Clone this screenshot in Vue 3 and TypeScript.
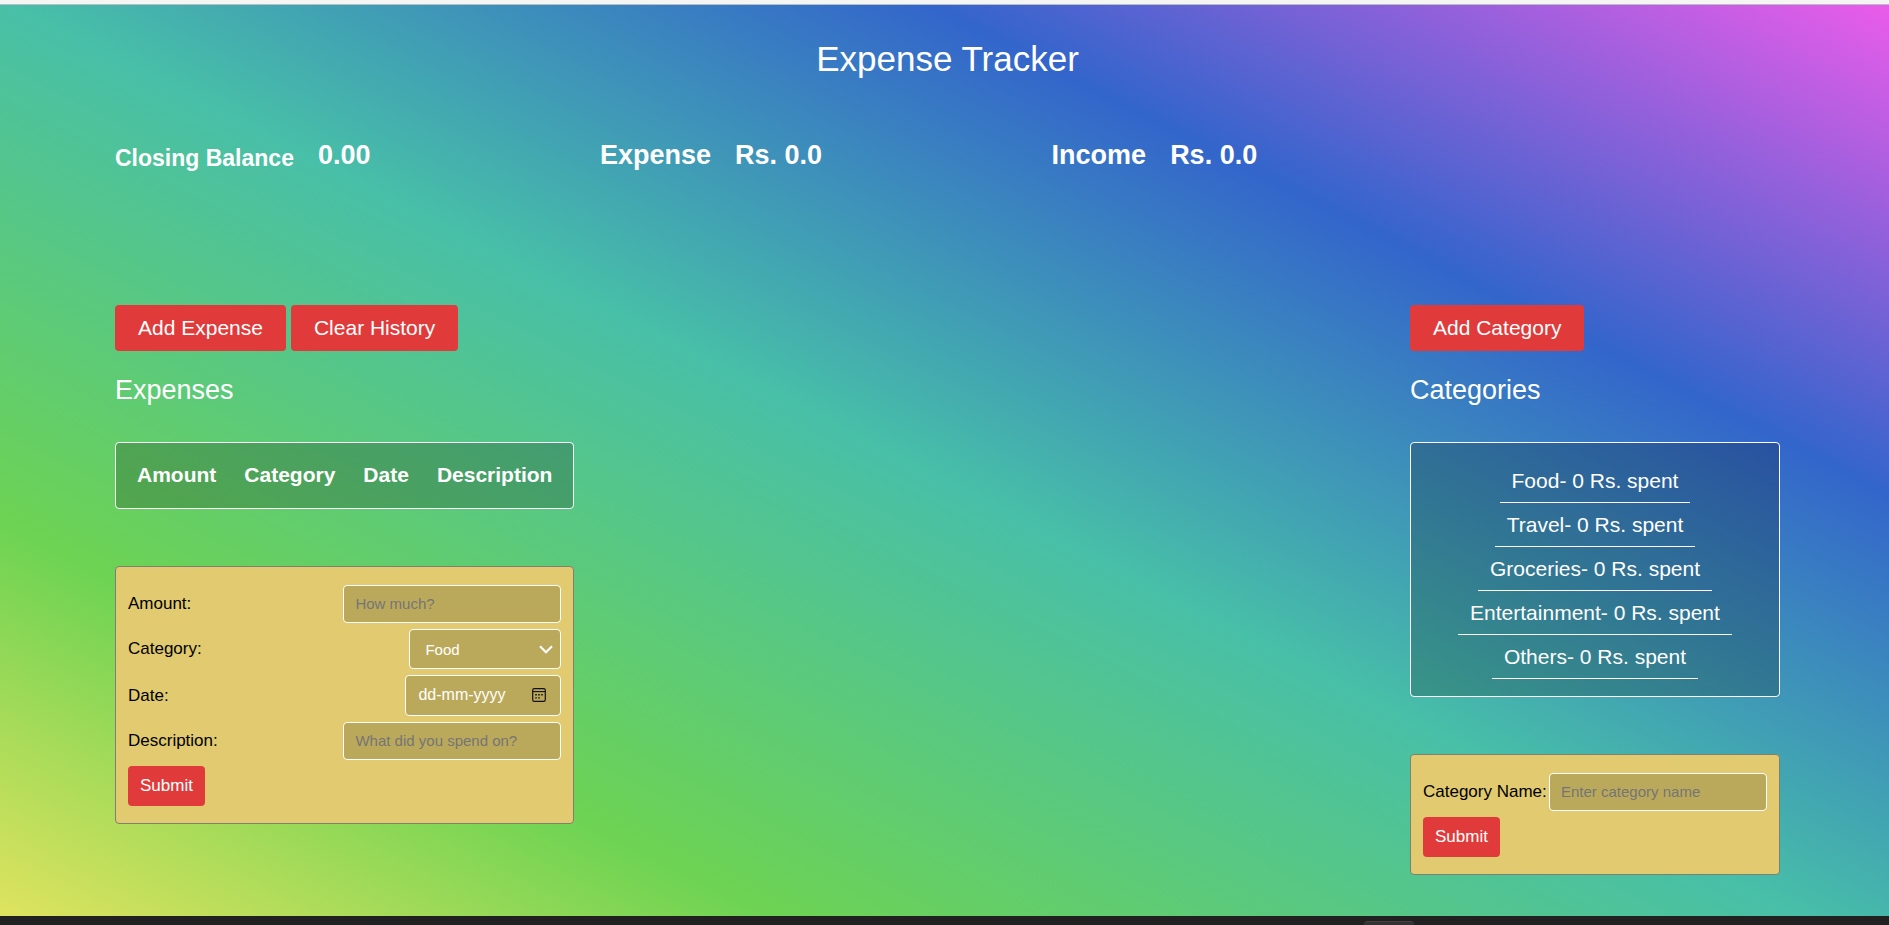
<script setup lang="ts">
import { ref } from 'vue'

interface Category {
  name: string
  spent: number
}

const columns: string[] = ['Amount', 'Category', 'Date', 'Description']
const categories = ref<Category[]>([
  { name: 'Food', spent: 0 },
  { name: 'Travel', spent: 0 },
  { name: 'Groceries', spent: 0 },
  { name: 'Entertainment', spent: 0 },
  { name: 'Others', spent: 0 },
])

const amount = ref('')
const selected = ref('Food')
const date = ref('')
const description = ref('')
const categoryName = ref('')

function addCategory(): void {
  const name = categoryName.value.trim()
  if (name) categories.value.push({ name, spent: 0 })
  categoryName.value = ''
}
</script>

<template>
  <div class="app">
    <div class="top-edge"></div>
    <main class="page">
      <h1>Expense Tracker</h1>

      <section class="summary">
        <div class="figure"><span class="closing">Closing Balance</span><span>0.00</span></div>
        <div class="figure"><span>Expense</span><span>Rs. 0.0</span></div>
        <div class="figure"><span>Income</span><span>Rs. 0.0</span></div>
      </section>

      <div class="columns">
        <section class="column">
          <div class="actions">
            <button class="btn large" type="button">Add Expense</button>
            <button class="btn large" type="button">Clear History</button>
          </div>
          <h2>Expenses</h2>
          <div class="panel history">
            <table>
              <thead>
                <tr>
                  <th v-for="c in columns" :key="c" scope="col">{{ c }}</th>
                </tr>
              </thead>
            </table>
          </div>
          <form class="form" @submit.prevent>
            <div class="row">
              <label for="amount">Amount:</label>
              <input id="amount" v-model="amount" class="field" type="text" placeholder="How much?" />
            </div>
            <div class="row">
              <label for="category">Category:</label>
              <div class="control">
                <select id="category" v-model="selected" class="field select">
                  <option v-for="c in categories" :key="c.name">{{ c.name }}</option>
                </select>
                <svg class="chevron" viewBox="0 0 14 9" aria-hidden="true">
                  <path d="M1 1.2 7 7.2l6-6" fill="none" stroke="#fff" stroke-width="2.1" />
                </svg>
              </div>
            </div>
            <div class="row">
              <label for="date">Date:</label>
              <div class="control">
                <input id="date" v-model="date" class="field date" type="text" placeholder="dd-mm-yyyy" />
                <svg class="calendar" viewBox="0 0 14 14" aria-hidden="true">
                  <rect x="0.7" y="0.7" width="12.6" height="12.6" rx="1.6" fill="none" stroke="#111" stroke-width="1.2" />
                  <path d="M1 3.6h12" stroke="#111" stroke-width="1.1" />
                  <path
                    d="M3.2 6h1.6v1.4H3.2zM6.2 6h1.6v1.4H6.2zM9.2 6h1.6v1.4H9.2zM3.2 9.2h1.6v1.4H3.2zM6.2 9.2h1.6v1.4H6.2z"
                    fill="#111"
                  />
                </svg>
              </div>
            </div>
            <div class="row">
              <label for="description">Description:</label>
              <input
                id="description"
                v-model="description"
                class="field"
                type="text"
                placeholder="What did you spend on?"
              />
            </div>
            <button class="btn submit" type="submit">Submit</button>
          </form>
        </section>

        <section class="column right">
          <div class="actions">
            <button class="btn large" type="button">Add Category</button>
          </div>
          <h2>Categories</h2>
          <ul class="panel categories">
            <li v-for="c in categories" :key="c.name">{{ c.name }}- {{ c.spent }} Rs. spent</li>
          </ul>
          <form class="form" @submit.prevent="addCategory">
            <div class="row">
              <label for="category-name">Category Name:</label>
              <input
                id="category-name"
                v-model="categoryName"
                class="field"
                type="text"
                placeholder="Enter category name"
              />
            </div>
            <button class="btn submit" type="submit">Submit</button>
          </form>
        </section>
      </div>
    </main>
    <footer class="bottom-edge"><span class="tab"></span></footer>
  </div>
</template>

<style>
body {
  margin: 0;
}
</style>

<style scoped>
.app {
  box-sizing: border-box;
  display: flex;
  flex-direction: column;
  min-height: 100vh;
  font-family: 'Liberation Sans', Arial, sans-serif;
  color: #fff;
}

.app *,
.app *::before {
  box-sizing: border-box;
}

.top-edge {
  height: 5px;
  background: #f5f5f3;
  border-bottom: 1px solid #b5bfc4;
}

.page {
  flex: 1;
  padding: 33px 109px 40px 115px;
  background: linear-gradient(27deg, #dfe35f 0%, #6dd353 21%, #48bfa8 49%, #3365cb 74%, #ea5cea 100%);
}

.bottom-edge {
  height: 9px;
  padding-left: 72.2%;
  background: #212121;
  overflow: hidden;
}

.tab {
  display: block;
  width: 50px;
  height: 8px;
  margin-top: 5px;
  border-top: 1px solid #444;
  border-radius: 4px 4px 0 0;
  background: #333;
}

h1 {
  margin: 0 0 59px;
  font-size: 35px;
  line-height: 42px;
  font-weight: 400;
  text-align: center;
}

.summary {
  display: flex;
  justify-content: space-between;
  width: 68.6%;
  margin-bottom: 134px;
}

.figure {
  display: flex;
  align-items: flex-end;
  gap: 24px;
  font-size: 27px;
  line-height: 32px;
  font-weight: 700;
}

.closing {
  font-size: 23px;
  line-height: 26px;
}

.columns {
  display: flex;
  justify-content: space-between;
  align-items: flex-start;
}

.right {
  min-width: 370px;
}

.actions {
  display: flex;
  gap: 5px;
}

.btn {
  border: 0;
  border-radius: 4px;
  background: #e03b3a;
  color: #fff;
  font-family: inherit;
  cursor: pointer;
}

.large {
  height: 46px;
  padding: 0 23px;
  font-size: 21px;
}

.submit {
  align-self: flex-start;
  height: 40px;
  padding: 0 12px;
  font-size: 17px;
}

h2 {
  margin: 23px 0 36px;
  font-size: 27px;
  line-height: 32px;
  font-weight: 400;
}

.panel {
  margin: 0 0 57px;
  border: 1px solid #fff;
  border-radius: 4px;
  background: rgba(0, 0, 0, 0.2);
  font-size: 21px;
  line-height: 24px;
}

.history {
  padding: 6px 7px;
}

table {
  width: 100%;
  border-collapse: collapse;
}

th {
  padding: 13px 14px 15px;
  line-height: 25px;
}

.categories {
  display: flex;
  flex-direction: column;
  align-items: center;
  padding: 16px 12px 17px;
  list-style: none;
}

.categories li {
  padding: 10px 12px 9px;
  border-bottom: 1px solid #fff;
}

.form {
  display: flex;
  flex-direction: column;
  gap: 6px;
  padding: 18px 12px 17px;
  border: 1px solid #808070;
  border-radius: 4px;
  background: #e1ca6f;
  color: #000;
  font-size: 17px;
}

.row {
  display: flex;
  justify-content: space-between;
  align-items: center;
}

.control {
  position: relative;
  display: flex;
}

.field {
  width: 218px;
  height: 38px;
  padding: 0 11px 2px;
  border: 1px solid #fff;
  border-radius: 4px;
  background: #bba95b;
  color: #fff;
  font-family: inherit;
  font-size: 15px;
}

.field::placeholder {
  color: #757575;
  opacity: 1;
}

.select {
  width: 152px;
  height: 40px;
  padding: 0 28px 0 15px;
  appearance: none;
}

.select option {
  color: #000;
}

.date {
  width: 156px;
  height: 41px;
  padding-left: 12px;
  font-size: 16px;
}

.date::placeholder {
  color: #fff;
}

.chevron {
  position: absolute;
  top: 16px;
  right: 8px;
  width: 14px;
  height: 9px;
  pointer-events: none;
}

.calendar {
  position: absolute;
  top: 13px;
  right: 15px;
  width: 14px;
  height: 14px;
  pointer-events: none;
}
</style>
